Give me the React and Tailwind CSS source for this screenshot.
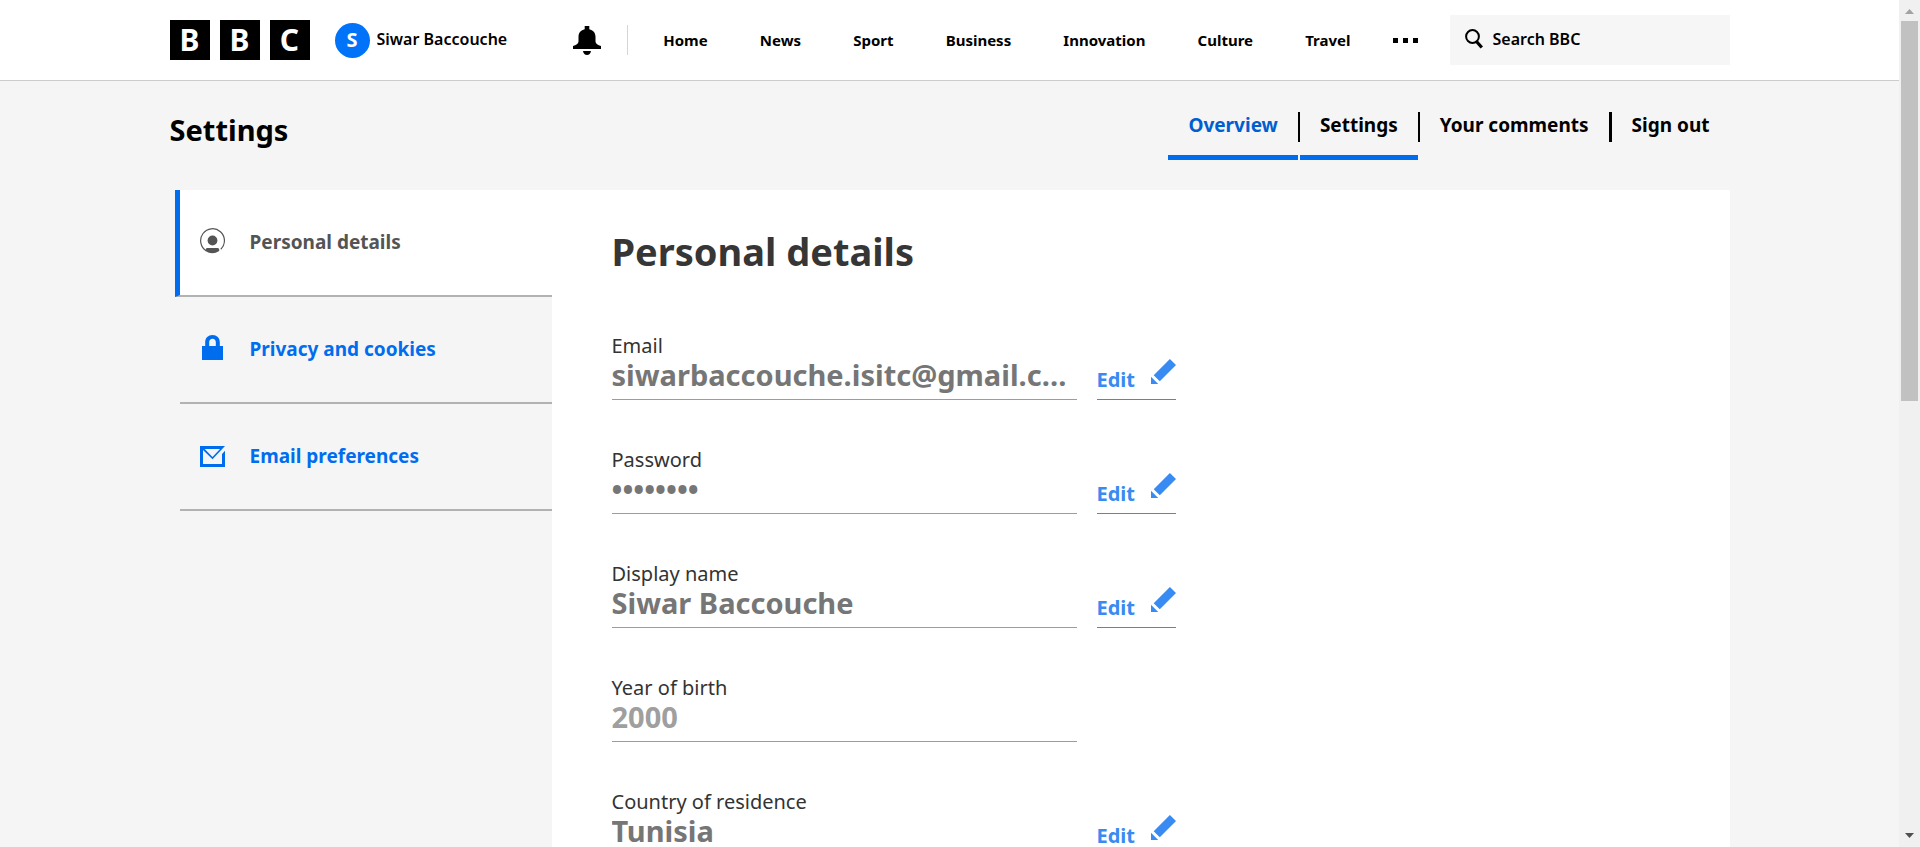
import React from "react";

const navLinks = ["Home", "News", "Sport", "Business", "Innovation", "Culture", "Travel"];

const fields = [
  { label: "Email", value: "siwarbaccouche.isitc@gmail.com", editable: true },
  { label: "Password", value: "••••••••", editable: true },
  { label: "Display name", value: "Siwar Baccouche", editable: true },
  { label: "Year of birth", value: "2000", editable: false },
  { label: "Country of residence", value: "Tunisia", editable: true },
];

function BellIcon() {
  return (
    <svg width="28" height="29" viewBox="0 0 28 29" fill="currentColor" aria-hidden="true">
      <path d="M11.7 0h4.6v3.2c3.8.9 6.2 3.6 6.2 7.3v5c0 2.4 2.4 3.6 5.5 4.6V23H0v-2.900c3.1-1 5.500-2.200 5.500-4.600v-5c0-3.700 2.400-6.400 6.200-7.300z" />
      <path d="M10 25h8c-.4 2.400-1.900 4-4 4s-3.600-1.600-4-4z" />
    </svg>
  );
}

function SearchIcon() {
  return (
    <svg className="shrink-0" width="18" height="20" viewBox="0 0 18 20" fill="none" stroke="currentColor" aria-hidden="true">
      <circle cx="7.500" cy="7.500" r="6.400" strokeWidth="2" />
      <path d="M11.500 12.500l5.300 6" strokeWidth="3.200" />
    </svg>
  );
}

function PersonIcon() {
  return (
    <svg width="25" height="29" viewBox="0 0 25 29" fill="currentColor" aria-hidden="true">
      <path d="M6.200 22.700A11.900 11.900 0 1 1 20.800 21.200" fill="none" stroke="currentColor" strokeWidth="1.200" />
      <circle cx="12.500" cy="12.500" r="4.900" />
      <path d="M7.400 20h10.200c1 0 1.600.9 1.600 1.700v1.300a12.500 12.500 0 0 1-13.800 0l.3-1.300c.1-1 .8-1.700 1.700-1.700z" />
    </svg>
  );
}

function LockIcon() {
  return (
    <svg width="25" height="29" viewBox="0 0 25 29" fill="currentColor" aria-hidden="true">
      <path d="M2 11h3.200V7.200C5.200 3 8.200 0 12.500 0s7.300 3 7.300 7.200V11H23v14H2zM9.200 11h6.600V7c0-2-1.300-3.300-3.300-3.300S9.200 5 9.200 7z" fillRule="evenodd" />
    </svg>
  );
}

function EnvelopeIcon() {
  return (
    <svg width="25" height="29" viewBox="0 0 25 29" fill="currentColor" aria-hidden="true">
      <path d="M0 4h25L12.500 17.200 3 8v14h19V12l3-3.200V25H0zM4.700 7l7.800 8L20 7z" fillRule="evenodd" />
    </svg>
  );
}

function PencilIcon() {
  return (
    <svg width="25" height="25" viewBox="0 0 25 25" fill="currentColor" aria-hidden="true">
      <path d="M18.900 0L25 6 8.800 22.200 2.700 16.200zM0 17.800L7.200 25H0z" />
    </svg>
  );
}

const sideLinks = [
  { label: "Personal details", Icon: PersonIcon, active: true },
  { label: "Privacy and cookies", Icon: LockIcon, active: false },
  { label: "Email preferences", Icon: EnvelopeIcon, active: false },
];

function Header() {
  return (
    <header className="border-b border-[#cccccc] bg-white">
      <div className="mx-auto flex h-20 max-w-[1560px] items-center">
        <a href="#bbc" aria-label="BBC" className="flex gap-[10px]">
          {["B", "B", "C"].map((letter, i) => (
            <span key={i} className="flex size-10 items-center justify-center bg-black text-[30px] leading-10 font-bold text-white">
              {letter}
            </span>
          ))}
        </a>
        <a href="#account" className="ml-[25px] flex items-center gap-[7px]">
          <span className="flex size-[35px] items-center justify-center rounded-full bg-[#0073f8] text-xl leading-none font-bold text-white">S</span>
          <span className="pb-[2px] text-base font-semibold whitespace-nowrap">Siwar Baccouche</span>
        </a>
        <button type="button" aria-label="Notifications" className="ml-[66px]">
          <BellIcon />
        </button>
        <div className="ml-[26px] h-[30px] w-px bg-[#d5d5d5]" />
        <nav className="ml-[35px] flex flex-1 items-center justify-between text-[15px] font-bold">
          {navLinks.map((name) => (
            <a key={name} href={"#" + name.toLowerCase()}>{name}</a>
          ))}
        </nav>
        <button type="button" aria-label="More" className="ml-[42px] flex gap-[5px]">
          <span className="size-[5px] bg-black" />
          <span className="size-[5px] bg-black" />
          <span className="size-[5px] bg-black" />
        </button>
        <label className="ml-8 flex h-[50px] w-[280px] items-center gap-[10px] bg-[#f6f6f6] pb-[2px] pl-[15px]">
          <SearchIcon />
          <input
            type="text"
            aria-label="Search BBC"
            placeholder="Search BBC"
            className="w-full min-w-0 bg-transparent text-base font-semibold outline-none placeholder:text-black"
          />
        </label>
      </div>
    </header>
  );
}

function SubHeader() {
  return (
    <div className="flex items-start justify-between pt-[31px] pb-[30px]">
      <h2 className="text-[29px] leading-9 font-bold">Settings</h2>
      <nav className="flex items-start text-[19px] leading-[27px] font-bold">
        <a href="#overview" className="h-12 border-b-[5px] border-[#006def] px-5 text-[#005fd0]">Overview</a>
        <span className="h-[30px] w-[2px] bg-black" />
        <a href="#settings" className="h-12 border-b-[5px] border-[#006def] px-5">Settings</a>
        <span className="h-[30px] w-[2px] bg-black" />
        <a href="#comments" className="h-12 px-5">Your comments</a>
        <span className="h-[30px] w-[3px] bg-black" />
        <a href="#signout" className="h-12 px-5">Sign out</a>
      </nav>
    </div>
  );
}

function Sidebar() {
  return (
    <nav className="w-[382px] shrink-0 bg-[#f5f5f5] pl-[5px] text-[19px] font-bold">
      {sideLinks.map(({ label, Icon, active }) => (
        <a
          key={label}
          href={"#" + label.toLowerCase().replaceAll(" ", "-")}
          className={
            "flex h-[107px] items-center gap-[25px] border-b-2 border-b-[#b2b2b2] pl-5 " +
            (active ? "border-l-[5px] border-l-[#006def] bg-white text-[#545454]" : "ml-[5px] text-[#006def]")
          }
        >
          <Icon />
          {label}
        </a>
      ))}
    </nav>
  );
}

function Field({ label, value, editable }) {
  return (
    <div className="flex items-end gap-5">
      <dl className="w-[465px] border-b border-[#9c9c9c] pb-1">
        <dt className="text-[20px] leading-6 text-[#333333]">{label}</dt>
        <dd
          className={
            "-mt-[3px] truncate text-[29px] leading-10 font-bold " +
            (editable ? "text-[#767676]" : "text-[#9f9f9f]")
          }
        >
          {value}
        </dd>
      </dl>
      {editable && (
        <a
          href="#edit"
          aria-label={"Edit " + label}
          className="flex h-[41px] w-[79px] items-start justify-between border-b border-[#388bf2] text-[20px] leading-6 font-bold text-[#388bf2]"
        >
          <span className="pt-[9px]">Edit</span>
          <PencilIcon />
        </a>
      )}
    </div>
  );
}

function Scrollbar() {
  return (
    <div aria-hidden="true" className="flex w-[21px] shrink-0 flex-col items-center bg-[#f0f0f0] text-[#505050]">
      <svg width="21" height="21" viewBox="0 0 21 21">
        <path d="M6 14l4.500-5 4.500 5z" fill="#a3a3a3" />
      </svg>
      <div className="h-[380px] w-[17px] bg-[#c1c1c1]" />
      <svg width="21" height="21" viewBox="0 0 21 21" className="mt-auto">
        <path d="M6 7l4.500 5 4.500-5z" fill="currentColor" />
      </svg>
    </div>
  );
}

export default function App() {
  return (
    <div className="flex h-screen overflow-hidden bg-[#f5f5f5] font-['Noto_Sans',sans-serif] text-black">
      <div className="flex min-w-0 flex-1 flex-col overflow-hidden">
        <Header />
        <div className="mx-auto flex w-full max-w-[1560px] flex-1 flex-col">
          <SubHeader />
          <div className="flex flex-1">
            <Sidebar />
            <main className="flex-1 bg-white pt-10 pl-[60px]">
              <h1 className="text-[38px] leading-[42px] font-bold text-[#363636]">Personal details</h1>
              <div className="mt-[62px] flex flex-col gap-12">
                {fields.map((field) => (
                  <Field key={field.label} {...field} />
                ))}
              </div>
            </main>
          </div>
        </div>
      </div>
      <Scrollbar />
    </div>
  );
}
